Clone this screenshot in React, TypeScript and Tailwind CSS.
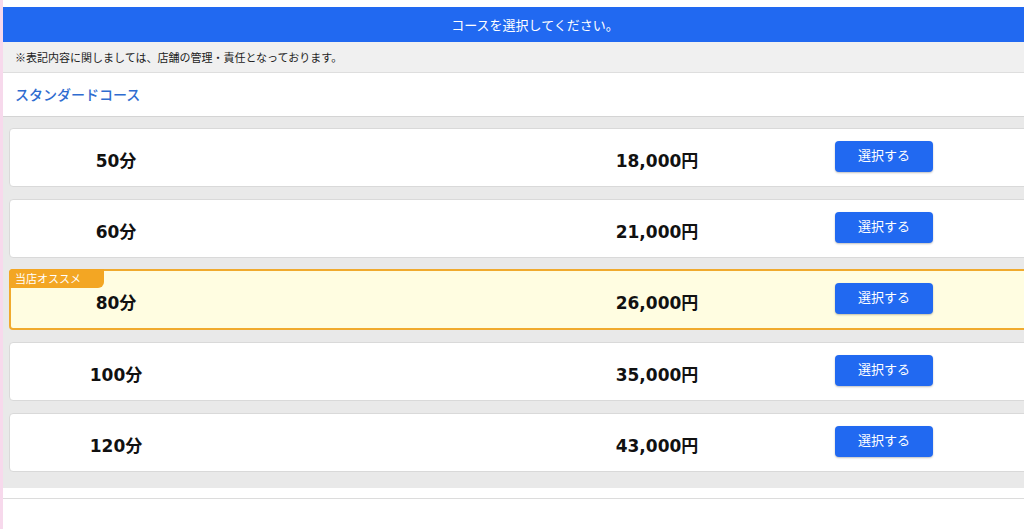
import React from "react";

type Course = { minutes: number; price: string; recommended?: boolean };

const courses: Course[] = [
  { minutes: 50, price: "18,000円" },
  { minutes: 60, price: "21,000円" },
  { minutes: 80, price: "26,000円", recommended: true },
  { minutes: 100, price: "35,000円" },
  { minutes: 120, price: "43,000円" },
];

const jp = { fontFamily: '"Noto Sans CJK JP", "Noto Sans", sans-serif' };
const num = { fontFamily: '"DejaVu Sans", "Noto Sans CJK JP", sans-serif' };

const CourseRow: React.FC<{ course: Course }> = ({ course }) => {
  const base = course.recommended
    ? "-mt-px h-[61px] border-2 border-[#f0aa2e] bg-[#fffde1]"
    : "h-[59px] border border-[#d9d9d9] bg-white";

  return (
    <div className={`relative flex items-center rounded-[4px] ${base}`}>
      {course.recommended && (
        <div
          className="absolute -left-[2px] -top-[2px] h-[19px] w-[95px] rounded-tl-[4px] rounded-br-[6px] bg-[#f3a623] pl-[6px] text-[11px] leading-[19px] text-white"
          style={jp}
        >
          当店オススメ
        </div>
      )}
      <div className={`flex items-center ${course.recommended ? "-ml-px" : ""}`}>
        <div className="w-[212px] shrink-0 pt-[8px] text-center text-[17px] font-bold text-[#111]" style={num}>
          {course.minutes}分
        </div>
        <div className="w-[335px] shrink-0" />
        <div className="w-[200px] shrink-0 pt-[8px] text-center text-[17px] font-bold text-[#111]" style={num}>
          {course.price}
        </div>
        <div className="w-[78px] shrink-0" />
        <button
          className="-mt-[2px] h-[31px] w-[98px] shrink-0 rounded-[4px] bg-[#2169f1] pb-[3px] text-[13px] text-white shadow-[0_1px_2px_rgba(0,0,0,0.25)]"
          style={jp}
        >
          選択する
        </button>
      </div>
    </div>
  );
};

export default function App() {
  return (
    <div className="flex h-[529px] w-[1024px] overflow-hidden bg-white">
      <div className="w-[3px] shrink-0 bg-[#f7d9ec]" />
      <div className="flex w-[1064px] shrink-0 flex-col">
        <div className="h-[7px] bg-white" />
        <div
          className="flex h-[35px] items-center justify-center bg-[#2169f1] text-[13px] text-white"
          style={jp}
        >
          コースを選択してください。
        </div>
        <div
          className="flex h-[31px] items-center border-b border-[#dedede] bg-[#f0f0f0] pl-[12px] text-[11px] text-[#222]"
          style={jp}
        >
          ※表記内容に関しましては、店舗の管理・責任となっております。
        </div>
        <div
          className="flex h-[44px] items-center border-b border-[#d4d4d4] bg-white pl-[12px] text-[14px] font-medium text-[#2f6cd0]"
          style={jp}
        >
          スタンダードコース
        </div>
        <div className="flex flex-col gap-[12px] bg-[#e9e9e9] pb-[16px] pl-[6px] pr-[3px] pt-[11px]">
          {courses.map((c) => (
            <CourseRow key={c.minutes} course={c} />
          ))}
        </div>
        <div className="h-[10px] bg-white" />
        <div className="flex-1 border-t border-[#dcdcdc] bg-white" />
      </div>
    </div>
  );
}
